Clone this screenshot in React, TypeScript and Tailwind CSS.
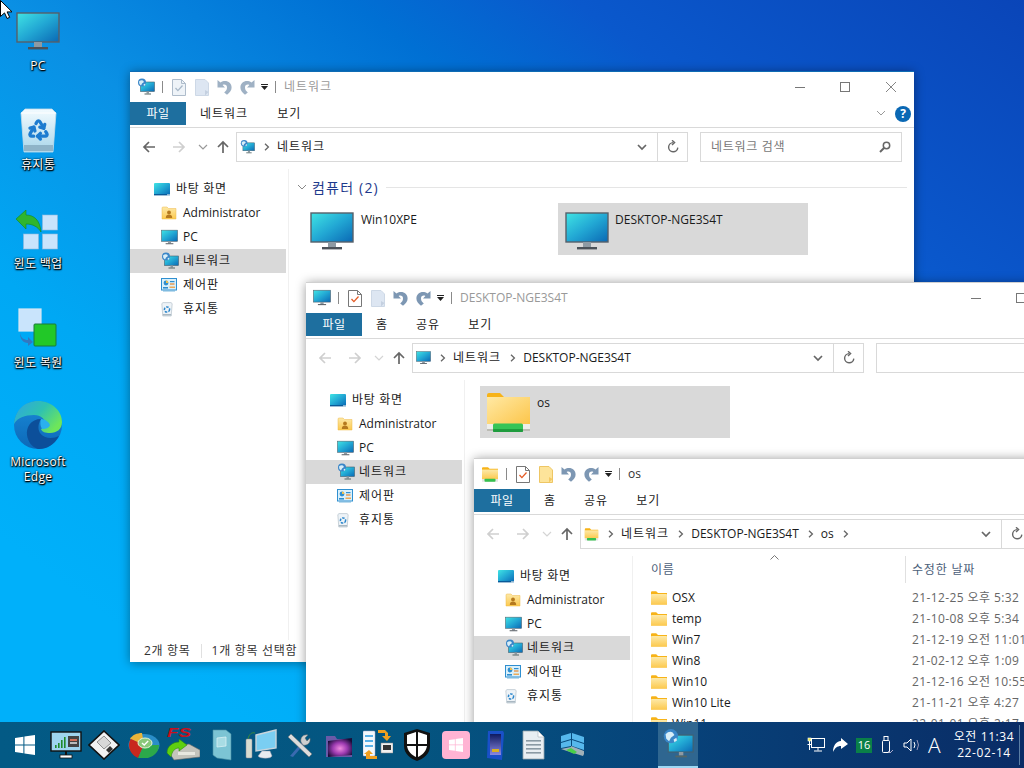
import React from "react";
import { Recycle } from "lucide-react";

const ko = (s: string) => (/[가-힣]/.test(s) ? "tracking-[1px]" : "");

const Defs = () => (
  <svg className="absolute w-0 h-0">
    <defs>
      <linearGradient id="scr" x1="0" y1="0" x2="1" y2="1">
        <stop offset="0" stopColor="#40e4e4" />
        <stop offset="0.5" stopColor="#22a8d4" />
        <stop offset="1" stopColor="#0a68b4" />
      </linearGradient>
      <linearGradient id="fold" x1="0" y1="0" x2="0" y2="1">
        <stop offset="0" stopColor="#fde9a8" />
        <stop offset="1" stopColor="#fcc94e" />
      </linearGradient>
      <linearGradient id="fold2" x1="0" y1="0" x2="1" y2="1">
        <stop offset="0" stopColor="#ffe9a4" />
        <stop offset="1" stopColor="#fcc447" />
      </linearGradient>
      <linearGradient id="edgeA" x1="0" y1="0" x2="1" y2="0.6">
        <stop offset="0" stopColor="#2fa4e4" />
        <stop offset="0.55" stopColor="#2fc2b0" />
        <stop offset="1" stopColor="#6ee65a" />
      </linearGradient>
      <linearGradient id="edgeB" x1="0" y1="0" x2="0" y2="1">
        <stop offset="0" stopColor="#1a8ad8" />
        <stop offset="1" stopColor="#0c68b8" />
      </linearGradient>
      <linearGradient id="bin" x1="0" y1="0" x2="0" y2="1">
        <stop offset="0" stopColor="#f2fbff" />
        <stop offset="1" stopColor="#a9d6ea" />
      </linearGradient>
      <linearGradient id="sdc" x1="0" y1="0" x2="0" y2="1">
        <stop offset="0" stopColor="#0e1a60" />
        <stop offset="1" stopColor="#8a88e0" />
      </linearGradient>
      <radialGradient id="purp" cx="0.5" cy="0.55" r="0.6">
        <stop offset="0" stopColor="#f08ae0" />
        <stop offset="0.5" stopColor="#9c3ab0" />
        <stop offset="1" stopColor="#1a0c38" />
      </radialGradient>
    </defs>
  </svg>
);

const Monitor = ({ size = 16 }: { size?: number }) => (
  <svg width={size} height={size} viewBox="0 0 44 40">
    <rect x="1" y="1" width="42" height="29" fill="url(#scr)" stroke="#56606a" strokeWidth="1.4" />
    <rect x="18" y="30" width="8" height="5" fill="#8e9aa3" />
    <rect x="12" y="35" width="20" height="2.4" fill="#4b5259" />
  </svg>
);

const NetIcon = ({ size = 18 }: { size?: number }) => (
  <svg width={size} height={size} viewBox="0 0 18 18">
    <rect x="3.5" y="4" width="14" height="9.5" fill="url(#scr)" stroke="#44606e" strokeWidth="0.6" />
    <rect x="9.5" y="13.5" width="2.5" height="2" fill="#8e9aa3" />
    <rect x="7.5" y="15.5" width="6.5" height="1" fill="#566" />
    <circle cx="5" cy="4.6" r="4" fill="#3a86c8" />
    <path d="M2 3.5q2-2 4-1l1 1.4-2 1.6-1 2-1.6-1.5z" fill="#d8eef8" />
    <path d="M6.5 6.5l1.6-1 .3 1.5-1.4 1z" fill="#d8eef8" />
  </svg>
);

const DeskIcon = () => (
  <svg width="17" height="13" viewBox="0 0 17 13">
    <rect x="0" y="0" width="16" height="12" rx="1" fill="url(#scr)" />
    <rect x="0" y="11" width="16" height="1.4" fill="#0a5a98" />
    <rect x="13" y="11.4" width="3" height="1" fill="#e0f0f8" />
  </svg>
);

const UserFolder = () => (
  <svg width="16" height="14" viewBox="0 0 16 14">
    <path d="M1 2a1 1 0 0 1 1-1h4l1.5 1.5H15v10.5H1z" fill="url(#fold)" stroke="#eeb94a" strokeWidth="0.5" />
    <circle cx="8" cy="6.4" r="1.9" fill="#b5791e" />
    <path d="M4.8 12c0-2.6 1.4-3.4 3.2-3.4s3.2.8 3.2 3.4z" fill="#b5791e" />
  </svg>
);

const CtrlIcon = () => (
  <svg width="16" height="14" viewBox="0 0 16 14">
    <rect x="0.5" y="0.5" width="15" height="11.5" fill="#d9f0fb" stroke="#2f8fd0" />
    <rect x="2" y="9" width="5" height="1.6" fill="#2f8fd0" />
    <rect x="8.5" y="8.6" width="5.5" height="1.2" fill="#f29a2e" />
    <circle cx="5" cy="5" r="2.4" fill="#2f8fd0" />
    <path d="M5 5V2.6A2.4 2.4 0 0 1 7.4 5z" fill="#f2c14e" />
    <rect x="9" y="3" width="4.5" height="1.2" fill="#2f8fd0" />
    <rect x="9" y="5.4" width="4.5" height="1.2" fill="#e8862e" />
    <rect x="2" y="12.2" width="12" height="1.3" fill="#7ab8de" />
  </svg>
);

const BinSmall = () => (
  <svg width="12" height="15" viewBox="0 0 12 15">
    <path d="M0.8 1.6L2 .6h8l1.2 1-1 12.4H1.8z" fill="#eef3f7" stroke="#aab8c2" strokeWidth="0.6" />
    <circle cx="6" cy="7.5" r="2.6" fill="none" stroke="#2a86cc" strokeWidth="1.5" strokeDasharray="2.5 1.2" />
    <rect x="1.8" y="12" width="8.4" height="1.5" fill="#aab8c2" />
  </svg>
);

const Folder = ({ size = 16 }: { size?: number }) => (
  <svg width={size} height={size} viewBox="0 0 16 14">
    <path d="M0 1.2A1 1 0 0 1 1 .2h4.2L7 2h9v11.5H0z" fill="#f7b318" />
    <rect x="0" y="3" width="16" height="10.6" rx="0.4" fill="url(#fold)" />
  </svg>
);

const NetFolder = ({ size = 18 }: { size?: number }) => (
  <svg width={size} height={size} viewBox="0 0 18 18">
    <path d="M1 3.2A1 1 0 0 1 2 2.2h5l1.6 1.6H17v10.4H1z" fill="#f7b318" />
    <rect x="1" y="4.6" width="16" height="9.6" fill="url(#fold)" />
    <rect x="1" y="14.2" width="16" height="2.6" fill="#e4e6e4" />
    <rect x="3.5" y="13.8" width="11" height="3" rx="0.8" fill="#35c04e" />
  </svg>
);

const BigNetFolder = () => (
  <svg width="43" height="41" viewBox="0 0 43 41">
    <path d="M0 3a2 2 0 0 1 2-2h11l5 5h25v31H0z" fill="#f7b318" />
    <rect x="0" y="5" width="43" height="29" fill="url(#fold2)" />
    <rect x="0" y="32" width="43" height="7" fill="#eeeeea" />
    <rect x="0" y="37" width="43" height="2" fill="#bcbcb4" />
    <rect x="6" y="31.5" width="30" height="8.5" rx="1.5" fill="#37c457" />
    <rect x="6" y="37" width="30" height="3" rx="1" fill="#1f9c3e" />
  </svg>
);

const ToolDoc = ({ red }: { red: boolean }) => (
  <svg width="14" height="17" viewBox="0 0 14 17">
    <path d="M.5.5h9l4 4v12H.5z" fill={red ? "#fff" : "#eef3f8"} stroke={red ? "#777" : "#aebccb"} />
    <path d="M9.5.5v4h4" fill="none" stroke={red ? "#777" : "#aebccb"} />
    <path d="M3.5 9l2.4 2.6L10.5 6.5" fill="none" stroke={red ? "#e45a24" : "#a8b8c8"} strokeWidth="1.3" />
  </svg>
);

const ToolBlank = ({ yellow }: { yellow: boolean }) => (
  <svg width="14" height="17" viewBox="0 0 14 17">
    <path d="M.5.5h9.5l3.5 3.5v12.5H.5z" fill={yellow ? "#fde49a" : "#dde6f2"} stroke={yellow ? "#eec664" : "#cdd8e6"} />
    <path d="M10 11v5.5l3.5-3.5z" fill={yellow ? "#f4c964" : "#c4d0e0"} />
  </svg>
);

const Arrow = ({ flip, color }: { flip?: boolean; color: string }) => (
  <svg width="15" height="16" viewBox="0 0 15 16" className={flip ? "-scale-x-100" : ""}>
    <path d="M0.5 1v7.5h7.5L5.6 6C7.8 5 10 6 10 8.4c0 2-1 3.4-2.8 5l2.8 2.4c3-2.4 4.6-4.6 4.6-7.4C14.600 3 8.500 0 3.500 3.500z" fill={color} />
  </svg>
);

const NavArrow = ({ dir, color }: { dir: "l" | "r" | "u"; color: string }) => (
  <svg width="14" height="14" viewBox="0 0 14 14" fill="none" stroke={color} strokeWidth="1.7">
    {dir === "l" && <path d="M13 7H2M7 2L2 7l5 5" />}
    {dir === "r" && <path d="M1 7h11M7 2l5 5-5 5" />}
    {dir === "u" && <path d="M7 13V2M2 7l5-5 5 5" />}
  </svg>
);

const Crumb = () => (
  <svg width="6" height="8" viewBox="0 0 6 8" fill="none" stroke="#666" strokeWidth="1.3">
    <path d="M1 .8L4.4 4 1 7.2" />
  </svg>
);

const Chev = ({ color = "#666", w = 1.7 }: { color?: string; w?: number }) => (
  <svg width="10" height="7" viewBox="0 0 10 7" fill="none" stroke={color} strokeWidth={w}>
    <path d="M1 1l4 4 4-4" />
  </svg>
);

const Refresh = () => (
  <svg width="12" height="14" viewBox="0 0 12 14" fill="none" stroke="#666" strokeWidth="1.4">
    <path d="M6.2 2.6a4.6 4.6 0 1 0 4.6 5" />
    <path d="M5 .3l2.6 2.3L5 5" fill="none" />
  </svg>
);

const NAV: { label: string; icon: React.ReactNode; sel?: boolean }[] = [
  { label: "Administrator", icon: <UserFolder /> },
  { label: "PC", icon: <Monitor size={17} /> },
  { label: "네트워크", icon: <NetIcon />, sel: true },
  { label: "제어판", icon: <CtrlIcon /> },
  { label: "휴지통", icon: <BinSmall /> },
];

const NavPane = () => (
  <div className="w-[158px] shrink-0 pt-[8px] pr-[2px] text-[#1a1a1a] text-[12px]">
    <div className="h-[24px] flex items-center pl-[24px] gap-[5px]">
      <DeskIcon />
      <span className="tracking-[0.7px]">바탕 화면</span>
    </div>
    {NAV.map((n) => (
      <div key={n.label} className={`h-[24px] flex items-center pl-[31px] ${n.sel ? "bg-[#d9d9d9]" : ""}`}>
        <span className="w-[22px] flex justify-start items-center">{n.icon}</span>
        <span className={ko(n.label)}>{n.label}</span>
      </div>
    ))}
  </div>
);

type WinProps = {
  pos: string;
  icon: React.ReactNode;
  title: string;
  titleCls: string;
  tabs: string[];
  tabGaps: string[];
  active: boolean;
  crumbIcon: React.ReactNode;
  crumbs: string[];
  trailing?: boolean;
  search: string;
  help?: boolean;
  yellow?: boolean;
  children: React.ReactNode;
  status?: boolean;
};

const Explorer = (p: WinProps) => (
  <div className={`absolute w-[784px] bg-white flex flex-col border-t shadow-[0_1px_10px_rgba(0,0,0,0.4)] ${p.help ? "border-[#0f6cb4]" : "border-[#d0d0d0]"} ${p.pos}`}>
    <div className="h-[30px] flex items-center pl-[7px] text-[12px]">
      <span className="w-[18px] flex justify-center">{p.icon}</span>
      <span className="w-px h-[12px] bg-[#8a8a8a] ml-[7px] mr-[9px]" />
      <ToolDoc red={p.active} />
      <span className="w-[9px]" />
      <ToolBlank yellow={!!p.yellow} />
      <span className="w-[8px]" />
      <Arrow color={p.active ? "#7d97b3" : "#9fb1c4"} />
      <span className="w-[8px]" />
      <Arrow flip color={p.active ? "#7d97b3" : "#9fb1c4"} />
      <span className="ml-[6px] mr-[7px] flex flex-col items-center gap-[1px]">
        <span className="w-[7px] h-px bg-[#222]" />
        <svg width="7" height="4" viewBox="0 0 7 4"><path d="M0 0h7L3.5 4z" fill="#222" /></svg>
      </span>
      <span className="w-px h-[12px] bg-[#8a8a8a] mr-[8px]" />
      <span className={`${p.titleCls} ${ko(p.title)}`}>{p.title}</span>
      <span className="ml-auto flex items-center">
        <span className="w-[10px] h-px bg-[#777]" />
        <span className="w-[10px] h-[10px] border border-[#777] ml-[35px]" />
        <svg width="10" height="10" viewBox="0 0 10 10" className="ml-[36px] mr-[18px]">
          <path d="M0 0l10 10M10 0L0 10" stroke="#777" strokeWidth="0.9" />
        </svg>
      </span>
    </div>
    <div className="h-[24px] flex items-start text-[12px] text-[#1a1a1a] border-b border-[#d9d9d9] box-content pb-px">
      <span className="w-[56px] h-[23px] bg-[#1e6f9f] text-white flex items-center justify-center tracking-[0.5px]">파일</span>
      {p.tabs.map((t, i) => (
        <span key={t} className={`h-[23px] flex items-center ${ko(t)} ${p.tabGaps[i]}`}>{t}</span>
      ))}
      {p.help && (
        <span className="ml-auto flex items-center h-[23px] mr-[3px]">
          <Chev color="#999" w={1} />
          <span className="ml-[9px] w-[16px] h-[16px] rounded-full bg-[#0a68b4] text-white text-[12px] font-bold flex items-center justify-center">?</span>
        </span>
      )}
    </div>
    <div className="h-[30px] mt-[4px] flex items-center">
      <span className="w-[106px] pl-[12px] flex items-center shrink-0">
        <NavArrow dir="l" color={p.help ? "#666" : "#cfcfcf"} />
        <span className="ml-[16px]"><NavArrow dir="r" color="#cfcfcf" /></span>
        <span className="ml-[12px] mr-[8px]"><Chev color={p.help ? "#999" : "#d4d4d4"} w={1.2} /></span>
        <NavArrow dir="u" color="#666" />
      </span>
      <div className="w-[452px] h-[30px] border border-[#d9d9d9] flex items-center text-[12px] text-[#1a1a1a] shrink-0">
        <span className="pl-[3px] w-[18px] flex">{p.crumbIcon}</span>
        {p.crumbs.map((c) => (
          <React.Fragment key={c}>
            <span className="ml-[9px] mr-[7px]"><Crumb /></span>
            <span className={ko(c)}>{c}</span>
          </React.Fragment>
        ))}
        {p.trailing && <span className="ml-[9px]"><Crumb /></span>}
        <span className="ml-auto mr-[10px]"><Chev /></span>
        <span className="w-[30px] h-full border-l border-[#d9d9d9] flex items-center justify-center"><Refresh /></span>
      </div>
      <div className="ml-[12px] w-[202px] h-[30px] border border-[#d9d9d9] flex items-center px-[10px] text-[12px] text-[#777]">
        <span className="tracking-[0.7px]">{p.search}</span>
        {p.help && (
          <svg width="12" height="12" viewBox="0 0 12 12" className="ml-auto" fill="none" stroke="#666" strokeWidth="1.5">
            <circle cx="7.5" cy="4.5" r="3.2" />
            <path d="M5 7L1 11" strokeWidth="2" />
          </svg>
        )}
      </div>
    </div>
    <div className="flex-1 flex mt-[7px] min-h-0">
      <NavPane />
      <div className="flex-1 border-l border-[#f0f0f0] min-w-0">{p.children}</div>
    </div>
    {p.status && (
      <div className="h-[22px] flex items-center text-[12px] text-[#333] pl-[14px] tracking-[0.7px]">
        <span>2개 항목</span>
        <span className="w-px h-[14px] bg-[#e0e0e0] ml-[10px] mr-[10px]" />
        <span>1개 항목 선택함</span>
      </div>
    )}
  </div>
);

const FILES: [string, string][] = [
  ["OSX", "21-12-25 오후 5:32"],
  ["temp", "21-10-08 오후 5:34"],
  ["Win7", "21-12-19 오전 11:01"],
  ["Win8", "21-02-12 오후 1:09"],
  ["Win10", "21-12-16 오전 10:55"],
  ["Win10 Lite", "21-11-21 오후 4:27"],
  ["Win11", "22-01-01 오후 2:17"],
];

const DeskLabel = ({ children }: { children: React.ReactNode }) => (
  <div className="text-white text-[12px] leading-[15px] text-center tracking-[0.3px] [text-shadow:0_0_2px_#000,0_1px_2px_#000,1px_1px_1px_#000]">{children}</div>
);

const DeskItem = ({ icon, label }: { icon: React.ReactNode; label: React.ReactNode }) => (
  <div className="h-[99px] w-[76px] flex flex-col items-center">
    <div className="h-[52px] mb-[4px] flex items-end justify-center">{icon}</div>
    <DeskLabel>{label}</DeskLabel>
  </div>
);

const RecycleBig = () => (
  <svg width="37" height="45" viewBox="0 0 37 45">
    <path d="M1 5L5 1h27l4 4-3 39H4z" fill="url(#bin)" stroke="#c5dce8" strokeWidth="0.8" />
    <path d="M1 5h35" stroke="#fff" strokeWidth="1" />
    <Recycle x={7} y={10} width={23} height={23} color="#1d7cd0" strokeWidth={3.4} />
    <rect x="4" y="37" width="29" height="6" fill="#8fb4c8" />
  </svg>
);

const BackupIcon = () => (
  <svg width="44" height="42" viewBox="0 0 44 42">
    <g fill="#c9e4fc" stroke="#8fb8dc" strokeWidth="0.6">
      <rect x="26.500" y="5" width="15" height="15" />
      <rect x="7.500" y="24" width="15" height="15" />
      <rect x="26.500" y="24" width="15" height="15" />
    </g>
    <path d="M0 9L10 0v5c8 0 14 5 15 17-3-5-8-8-15-8v5z" fill="#2fb52f" stroke="#138a1a" strokeWidth="0.6" />
  </svg>
);

const RestoreIcon = () => (
  <svg width="40" height="40" viewBox="0 0 40 40" className="mb-[3px]">
    <rect x="1" y="1" width="22" height="22" fill="#c9e4fc" stroke="#d8e8f4" strokeWidth="1.2" />
    <rect x="16" y="16" width="22" height="22" rx="1" fill="#22c828" stroke="#1a7a3a" strokeWidth="1" />
    <path d="M2 25c1 5 4 7 8 7v-3l5 5-5 4v-3c-5 0-8-4-8-10z" fill="#3278c0" />
  </svg>
);

const EdgeIcon = () => (
  <svg width="50" height="50" viewBox="0 0 50 50">
    <circle cx="25" cy="25" r="24" fill="url(#edgeB)" />
    <path d="M28 19C18 19 13 27 14 35c1 7 5 12 11 14 8 .5 16-4 21-13-6 3-15 3-19-3-3-5-1-11 1-14z" fill="#0c4f9a" />
    <path d="M1 24C2 10 12 1 25 1c14 0 24 10 24 21 0 7-5 11-12 11-5 0-8-1-9-4 3-1 5-3 5-5 0-4-5-9-12-9C12 15 4 18 1 24z" fill="url(#edgeA)" />
    <path d="M28 19c4 0 8 3 9 6-1 3-4 4-8 4-2-3-2-7-1-10z" fill="#2ab0ee" />
  </svg>
);

const T = ({ children }: { children: React.ReactNode }) => (
  <div className="w-[39px] h-[46px] flex items-center justify-center shrink-0">{children}</div>
);

const TaskIcons = () => (
  <div className="flex items-center h-full pl-[5px]">
    <T>
      <svg width="20" height="20" viewBox="0 0 20 20" fill="#fff">
        <path d="M0 3l8.4-1.2V9.4H0zM9.4 1.6L20 0v9.4H9.4zM0 10.4h8.4v7.8L0 17zM9.4 10.4H20V20l-10.6-1.5z" />
      </svg>
    </T>
    <span className="w-[2px]" />
    <T>
      <svg width="32" height="28" viewBox="0 0 32 28">
        <rect x="1" y="1" width="30" height="19" fill="#9ed4ee" stroke="#111" strokeWidth="1.4" />
        <g fill="#1f8a2a"><rect x="5" y="14" width="1.600" height="3" /><rect x="8" y="12" width="1.600" height="5" /><rect x="11" y="9" width="1.600" height="8" /><rect x="14" y="6" width="1.600" height="11" /></g>
        <rect x="18" y="5" width="11" height="11" fill="#444" />
        <rect x="20" y="8" width="7" height="2" fill="#d0705a" />
        <rect x="20" y="11" width="7" height="2" fill="#bbb" />
        <rect x="15" y="20" width="2" height="4" fill="#111" /><rect x="10" y="24" width="12" height="3" fill="#fff" stroke="#111" strokeWidth="0.8" />
      </svg>
    </T>
    <span className="ml-[-1px]" />
    <T>
      <svg width="32" height="30" viewBox="0 0 32 30">
        <path d="M16 1l15 14-15 14L1 15z" fill="#f2f2f2" stroke="#111" strokeWidth="1.6" />
        <path d="M9 12l7-6 7 7-7 6z" fill="#d8d8d8" stroke="#555" strokeWidth="0.6" />
        <path d="M18 20l4-4 3 3-4 4z" fill="#333" />
      </svg>
    </T>
    <span className="w-px" />
    <T>
      <svg width="32" height="27" viewBox="0 0 32 27">
        <ellipse cx="16" cy="13" rx="15.500" ry="11" fill="#2a8ec8" />
        <path d="M16 13L2 7c2-4 7-6 12-6z" fill="#e8b43a" />
        <path d="M1 13c0-3 1-5 2-6l13 6-6 13c-5-2-9-7-9-13z" fill="#c8281e" />
        <path d="M16 13h15c0 6-4 11-11 13H10z" fill="#2ca84a" />
        <ellipse cx="17" cy="11" rx="7" ry="5" fill="#8ac87a" stroke="#e8f4d8" strokeWidth="1" />
        <path d="M14 11l2.200 2 4-4" fill="none" stroke="#fff" strokeWidth="1.4" />
      </svg>
    </T>
    <T>
      <svg width="34" height="36" viewBox="0 0 34 36">
        <text x="1" y="10" fill="#c8101c" fontSize="12" fontWeight="900" fontStyle="italic" fontFamily="Liberation Sans" textLength="24" lengthAdjust="spacingAndGlyphs">FS</text>
        <path d="M7 20l16-3 11 6v7l-26 3-4-6z" fill="#c4c4bc" stroke="#666" strokeWidth="0.6" />
        <rect x="12" y="25" width="17" height="3" fill="#e8e8e0" />
        <path d="M1 26c0-7 6-11 12-11v-3l8 6-8 6v-3c-4 0-7 3-8 9z" fill="#5ed010" stroke="#2a8a10" strokeWidth="0.6" />
      </svg>
    </T>
    <T>
      <svg width="20" height="32" viewBox="0 0 20 32">
        <path d="M1 1h13l5 4v26l-14-2-4-3z" fill="#7cc4d4" stroke="#4a90a4" strokeWidth="0.6" />
        <path d="M5 9l9-1v9l-9 1z" fill="#a8dce4" stroke="#d8f0f4" strokeWidth="0.8" />
      </svg>
    </T>
    <T>
      <svg width="32" height="32" viewBox="0 0 32 32">
        <rect x="1" y="10" width="6" height="19" rx="1" fill="#d8dcd0" stroke="#889" strokeWidth="0.5" />
        <path d="M3 10c1-5 4-7 7-6" fill="none" stroke="#3a8a3a" strokeWidth="1" />
        <path d="M11 6l20-5v18l-20 3z" fill="#7acef2" stroke="#c8d4dc" strokeWidth="1.4" />
        <path d="M17 22h8l2 5c-1 3-12 3-14 0z" fill="#e8ecf0" stroke="#99a" strokeWidth="0.5" />
      </svg>
    </T>
    <T>
      <svg width="26" height="26" viewBox="0 0 26 26">
        <path d="M3 24L16 9l2 2L6 25z" fill="#3a6ab0" />
        <path d="M1 5l3-3 21 20-3 3z" fill="#dcdcdc" stroke="#666" strokeWidth="0.5" />
        <path d="M14 10c-1-4 2-8 7-7l-3 3 2 3 3-3c1 5-3 8-7 7z" fill="#cfcfcf" stroke="#666" strokeWidth="0.5" />
      </svg>
    </T>
    <T>
      <svg width="28" height="26" viewBox="0 0 28 26">
        <path d="M1 4h9l2 3h15v18H1z" fill="#6a5aa8" />
        <path d="M3 9l24-3v17L3 25z" fill="url(#purp)" />
      </svg>
    </T>
    <T>
      <svg width="30" height="30" viewBox="0 0 30 30">
        <rect x="0" y="1" width="12" height="25" rx="1" fill="#f4f8fc" stroke="#aac" strokeWidth="0.5" />
        <g fill="#5ab0e8"><rect x="2" y="5" width="8" height="2" /><rect x="2" y="10" width="8" height="2" /><rect x="2" y="15" width="8" height="2" /></g>
        <path d="M15 0h7l3 3v3h3l-4 5-5-5h3V3h-7z" fill="#f0a020" />
        <rect x="18" y="13" width="12" height="10" fill="#f0f0f0" stroke="#888" strokeWidth="0.5" />
        <rect x="20" y="15" width="8" height="5" fill="#333" />
        <path d="M3 29l0-5 -2 0 5-4 4 4-3 0v2h7v3z" fill="#f0a020" />
      </svg>
    </T>
    <T>
      <svg width="30" height="34" viewBox="0 0 30 34">
        <path d="M15 1l13 4v13c0 8-7 13-13 15C9 31 2 26 2 18V5z" fill="#111" />
        <path d="M14 4v12H5V7zM16 4l9 3v9h-9zM14 18v11c-4-2-8-5-9-11zM16 18h9c-1 6-5 9-9 11z" fill="#fff" />
      </svg>
    </T>
    <T>
      <div className="w-[28px] h-[28px] rounded-[4px] bg-[#ffb3d3] flex items-center justify-center">
        <svg width="14" height="14" viewBox="0 0 20 20" fill="#fff">
          <path d="M0 3l8.4-1.2V9.4H0zM9.4 1.6L20 0v9.4H9.4zM0 10.4h8.4v7.8L0 17zM9.4 10.4H20V20l-10.6-1.5z" />
        </svg>
      </div>
    </T>
    <T>
      <svg width="20" height="31" viewBox="0 0 20 31">
        <path d="M3 1h15l1 2-2 27-15-2z" fill="#1a50c8" />
        <rect x="5" y="4" width="11" height="21" fill="url(#sdc)" />
        <rect x="7" y="19" width="7" height="3" fill="#d8b020" />
      </svg>
    </T>
    <T>
      <svg width="23" height="30" viewBox="0 0 23 30">
        <path d="M1 1h15l6 6v22H1z" fill="#e8eef2" stroke="#98a4ac" strokeWidth="0.8" />
        <path d="M16 1v6h6z" fill="#fff" stroke="#98a4ac" strokeWidth="0.5" />
        <g fill="#8a9aa4"><rect x="4" y="10" width="15" height="1.600" /><rect x="4" y="14" width="15" height="1.600" /><rect x="4" y="18" width="15" height="1.600" /><rect x="4" y="22" width="15" height="1.600" /></g>
      </svg>
    </T>
    <T>
      <svg width="25" height="27" viewBox="0 0 25 27">
        <g fill="#56b8ec"><path d="M1 4l10-3v6L1 10zM12 1l12 4v6l-12-4zM1 11l10-3v6l-10 2zM12 8l12 4v6l-12-4z" /></g>
        <path d="M1 17l10-2v-1l13 5v3l-1 2-13-4z" fill="#a0b0b8" />
        <path d="M6 18l5-2 6 4-3 2z" fill="#48d048" />
      </svg>
    </T>
  </div>
);

export default function App() {
  return (
    <div className="relative w-[1024px] h-[768px] overflow-hidden font-['Open_Sans','Noto_Sans_CJK_KR',sans-serif] bg-[linear-gradient(to_bottom_left,#0a45b8_0%,#0a58cc_22%,#0070d4_33%,#0a90e4_50%,#00a8f4_68%,#00b0fa_85%)]">
      <Defs />
      <div className="absolute left-0 top-[2px] flex flex-col">
        <DeskItem icon={<Monitor size={44} />} label="PC" />
        <DeskItem icon={<RecycleBig />} label="휴지통" />
        <DeskItem icon={<BackupIcon />} label="윈도 백업" />
        <DeskItem icon={<RestoreIcon />} label="윈도 복원" />
        <DeskItem icon={<EdgeIcon />} label={<>Microsoft<br />Edge</>} />
      </div>

      <svg width="12" height="19" viewBox="0 0 12 19" className="absolute left-0 top-0">
        <path d="M.5.5v16l4-3.600 2.600 5.600 2.600-1.200-2.600-5.400h5z" fill="#fff" stroke="#000" />
      </svg>

      <Explorer
        pos="left-[130px] top-[71px] h-[591px]"
        icon={<NetIcon />}
        title="네트워크"
        titleCls="text-[#999]"
        tabs={["네트워크", "보기"]}
        tabGaps={["ml-[14px]", "ml-[29px]"]}
        active={false}
        crumbIcon={<NetIcon />}
        crumbs={["네트워크"]}
        search="네트워크 검색"
        help
        status
      >
        <div className="pt-[7px] pl-[8px] pr-[7px]">
          <div className="flex items-center text-[#1e3a8c] text-[14px] h-[22px]">
            <Chev color="#888" w={1} />
            <span className="ml-[5px] tracking-[1.2px]">컴퓨터 (2)</span>
            <span className="flex-1 h-px bg-[#e5e5e5] ml-[7px]" />
          </div>
          <div className="flex gap-[5px] mt-[5px] ml-[6px] text-[12px] text-[#1a1a1a]">
            <div className="w-[250px] h-[52px] flex pt-[7px] pl-[7px]">
              <Monitor size={44} />
              <span className="ml-[7px] mt-[1px]">Win10XPE</span>
            </div>
            <div className="w-[250px] h-[52px] flex pt-[7px] pl-[7px] bg-[#d9d9d9]">
              <Monitor size={44} />
              <span className="ml-[6px] mt-[1px]">DESKTOP-NGE3S4T</span>
            </div>
          </div>
        </div>
      </Explorer>

      <Explorer
        pos="left-[306px] top-[282px] h-[460px]"
        icon={<Monitor size={18} />}
        title="DESKTOP-NGE3S4T"
        titleCls="text-[#999]"
        tabs={["홈", "공유", "보기"]}
        tabGaps={["ml-[14px]", "ml-[28px]", "ml-[28px]"]}
        active
        crumbIcon={<Monitor size={18} />}
        crumbs={["네트워크", "DESKTOP-NGE3S4T"]}
        search=""
      >
        <div className="pt-[6px] pl-[15px] text-[12px] text-[#1a1a1a]">
          <div className="w-[250px] h-[52px] flex pt-[6px] pl-[7px] bg-[#d9d9d9]">
            <BigNetFolder />
            <span className="ml-[7px] mt-[2px]">os</span>
          </div>
        </div>
      </Explorer>

      <Explorer
        pos="left-[474px] top-[458px] h-[290px]"
        icon={<NetFolder />}
        title="os"
        titleCls="text-[#333]"
        tabs={["홈", "공유", "보기"]}
        tabGaps={["ml-[14px]", "ml-[28px]", "ml-[28px]"]}
        active
        yellow
        crumbIcon={<NetFolder />}
        crumbs={["네트워크", "DESKTOP-NGE3S4T", "os"]}
        trailing
        search=""
      >
        <div className="text-[12px] relative">
          <svg width="9" height="5" viewBox="0 0 9 5" className="absolute left-[137px] top-[-1px]" fill="none" stroke="#777">
            <path d="M.5 4.5l4-4 4 4" />
          </svg>
          <div className="h-[27px] flex items-center text-[#4c607a]">
            <span className="w-[272px] pl-[18px] h-full flex items-center tracking-[0.8px]">이름</span>
            <span className="h-full border-l border-[#e0e0e0] pl-[6px] flex items-center tracking-[0.8px]">수정한 날짜</span>
          </div>
          <div className="pt-[4px]">
            {FILES.map(([n, d]) => (
              <div key={n} className="h-[21px] flex items-center">
                <span className="w-[272px] pl-[18px] flex items-center text-[#1a1a1a]">
                  <Folder />
                  <span className="ml-[5px]">{n}</span>
                </span>
                <span className="pl-[7px] text-[#666] tracking-[0.4px]">{d}</span>
              </div>
            ))}
          </div>
        </div>
      </Explorer>

      <div className="absolute left-0 right-0 bottom-0 h-[46px] flex items-center bg-[linear-gradient(90deg,#035a85_0%,#045580_40%,#07437a_65%,#0a2c66_100%)]">
        <TaskIcons />
        <div className="ml-[66px] w-[40px] h-[46px] bg-[#2f6690] relative flex items-center justify-center border-b-[2px] border-[#9fd8f4]">
          <NetIcon size={32} />
        </div>
        <div className="ml-[109px] flex items-center text-white">
          <svg width="18" height="18" viewBox="0 0 18 18" fill="none" stroke="#fff">
            <rect x="4.500" y="2.500" width="13" height="9" />
            <path d="M11 11.500v3M7 15h8M.5 8.500h4M2.500 5v9" />
            <rect x="1" y="2" width="3" height="3" fill="#e8e850" stroke="#fff" strokeWidth="0.6" />
          </svg>
          <svg width="16" height="16" viewBox="0 0 16 16" className="ml-[7px]" fill="#fff">
            <path d="M9 1l7 6-7 5V9C5 9 3 11 1 15 1 9 4 4 9 4z" />
          </svg>
          <span className="ml-[8px] w-[16px] h-[15px] bg-[#0a8048] text-[11px] flex items-center justify-center">16</span>
          <svg width="14" height="20" viewBox="0 0 14 20" className="ml-[8px]" fill="none" stroke="#fff">
            <rect x="2.500" y="5.500" width="7" height="12" rx="1" />
            <rect x="4" y="1.500" width="4" height="4" />
            <path d="M8 16l2 2 3-3" stroke="#aac" />
          </svg>
          <svg width="18" height="16" viewBox="0 0 18 16" className="ml-[9px]" fill="none" stroke="#fff">
            <path d="M1 6h3l4-4v12l-4-4H1z" />
            <path d="M11 5q2 3 0 6" />
            <path d="M14 3q3 5 0 10" stroke="#99b" />
          </svg>
          <span className="ml-[7px] w-[15px] text-[21px] leading-none font-light">A</span>
          <div className="ml-[10px] w-[62px] text-center text-[12px] leading-[16px] tracking-[0.6px]">
            <div>오전 11:34</div>
            <div>22-02-14</div>
          </div>
          <span className="ml-[4px] w-px h-[40px] bg-[#5b7ea4]" />
        </div>
      </div>
    </div>
  );
}
